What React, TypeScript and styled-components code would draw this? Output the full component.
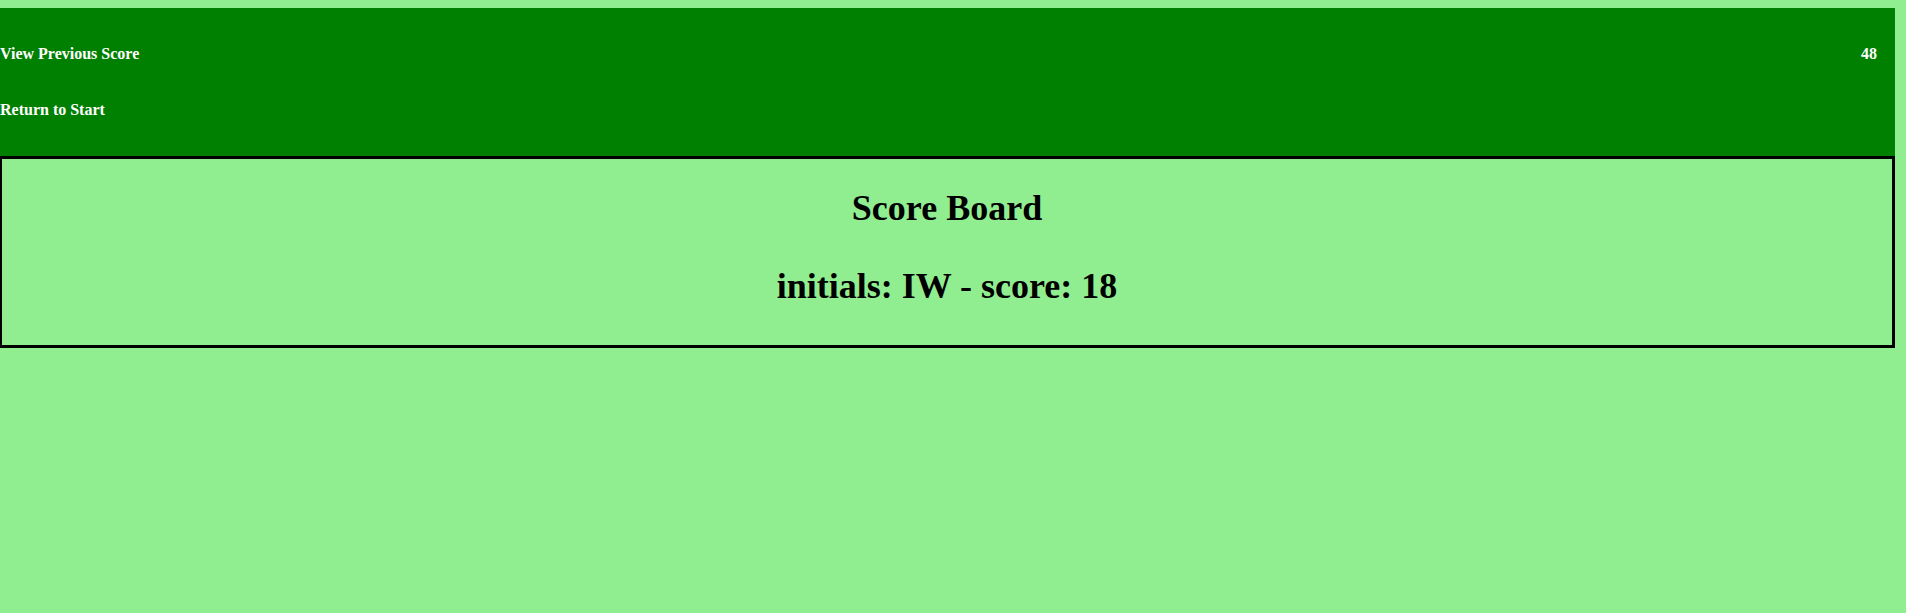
import React from "react";
import styled, { createGlobalStyle } from "styled-components";

const GlobalStyle = createGlobalStyle`
    html, body {
        background: #90ee90;
    }
    body {
        margin: 8px 11px 0 0;
        font-family: "Liberation Serif", "Times New Roman", serif;
    }
`;

const Header = styled.header`
    display: flex;
    justify-content: space-between;
    align-items: flex-start;
    background: green;
    color: white;
    padding: 37px 18px 37px 0;
`;

const NavList = styled.nav`
    display: flex;
    flex-direction: column;
    gap: 38px;
`;

const NavLink = styled.a`
    font-size: 16px;
    font-weight: bold;
    line-height: 18px;
    color: white;
    text-decoration: none;
    cursor: pointer;
`;

const Timer = styled.span`
    font-size: 16px;
    font-weight: bold;
    line-height: 18px;
`;

const Board = styled.section`
    border: 3px solid black;
    border-left-width: 2px;
    padding: 29px 0 38px;
    display: flex;
    flex-direction: column;
    align-items: center;
    gap: 37px;
`;

const Title = styled.h1`
    margin: 0;
    font-size: 36px;
    line-height: 41px;
    font-weight: bold;
    color: black;
`;

const scores = [{ initials: "IW", score: 18 }];

const App: React.FC = () => {
    return (
        <>
            <GlobalStyle />
            <Header>
                <NavList>
                    <NavLink>View Previous Score</NavLink>
                    <NavLink>Return to Start</NavLink>
                </NavList>
                <Timer>48</Timer>
            </Header>
            <Board>
                <Title>Score Board</Title>
                {scores.map((s) => (
                    <Title key={s.initials}>
                        initials: {s.initials} - score: {s.score}
                    </Title>
                ))}
            </Board>
        </>
    );
};

export default App;
